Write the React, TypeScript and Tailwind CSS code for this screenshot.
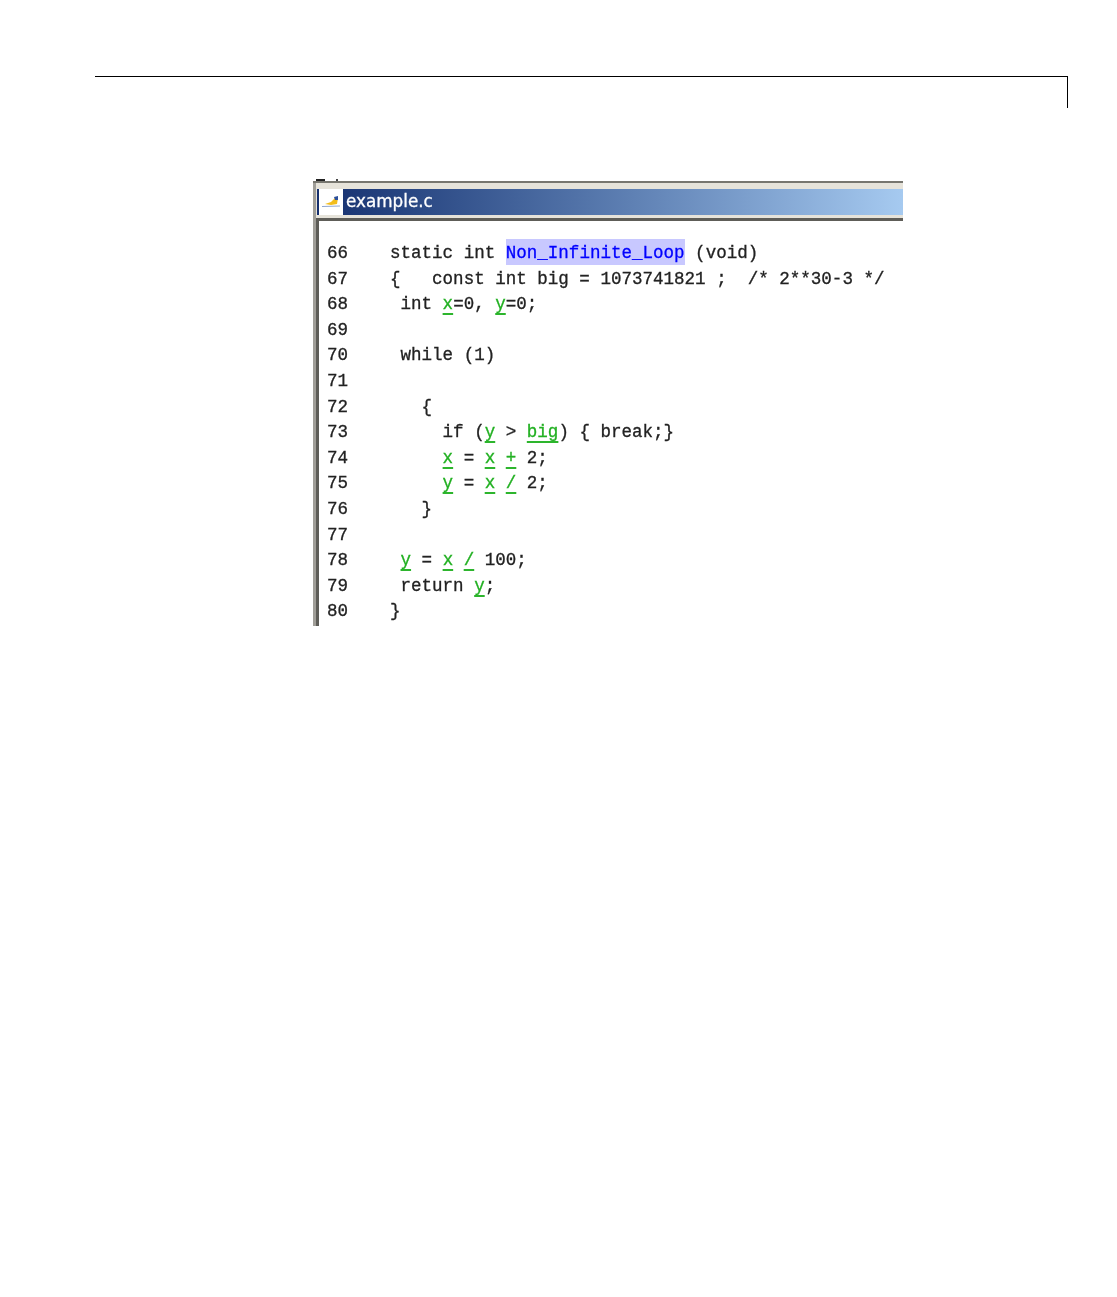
const rows: { n: number; code: React.ReactNode }[] = [
  {
    n: 66,
    code: (
      <>
        static int <span className="bg-[#c8c8ff] text-[#0000ff] pt-[4px] pb-[2px]">Non_Infinite_Loop</span> (void)
      </>
    ),
  },
  { n: 67, code: "{   const int big = 1073741821 ;  /* 2**30-3 */" },
  {
    n: 68,
    code: (
      <>
        {" int "}
        <Ok>x</Ok>=0, <Ok>y</Ok>=0;
      </>
    ),
  },
  { n: 69, code: "" },
  { n: 70, code: " while (1)" },
  { n: 71, code: "" },
  { n: 72, code: "   {" },
  {
    n: 73,
    code: (
      <>
        {"     if ("}
        <Ok>y</Ok> {">"} <Ok>big</Ok>) {"{ break;}"}
      </>
    ),
  },
  {
    n: 74,
    code: (
      <>
        {"     "}
        <Ok>x</Ok> = <Ok>x</Ok> <Ok>+</Ok> 2;
      </>
    ),
  },
  {
    n: 75,
    code: (
      <>
        {"     "}
        <Ok>y</Ok> = <Ok>x</Ok> <Ok>/</Ok> 2;
      </>
    ),
  },
  { n: 76, code: "   }" },
  { n: 77, code: "" },
  {
    n: 78,
    code: (
      <>
        {" "}
        <Ok>y</Ok> = <Ok>x</Ok> <Ok>/</Ok> 100;
      </>
    ),
  },
  {
    n: 79,
    code: (
      <>
        {" return "}
        <Ok>y</Ok>;
      </>
    ),
  },
  { n: 80, code: "}" },
];

// green = proven safe by the checker
function Ok({ children }: { children: React.ReactNode }) {
  return (
    <span className="text-[#22b022] underline decoration-[#2db52d] decoration-[1.5px] underline-offset-[4px] [text-decoration-skip-ink:none]">
      {children}
    </span>
  );
}

function FileIcon() {
  return (
    <div className="w-[24px] h-[26px] bg-white flex items-center justify-center">
      <svg width="20" height="14" viewBox="0 0 20 14">
        <path d="M4 9 L10 7 L14 3 L17 3 L16 9 L10 10 Z" fill="#f2bd1c" />
        <path d="M13 2 L17 1 L17 5 L14 5 Z" fill="#2c4f9a" />
        <path d="M1 11 L19 10.5 L19 11.5 L1 12 Z" fill="#8fa6d0" />
      </svg>
    </div>
  );
}

export default function App() {
  return (
    <div className="min-h-[1297px] bg-white pt-[76px]">
      <div className="ml-[95px] w-[973px] h-[32px] border-t border-r border-black" />

      <div className="ml-[313px] mt-[71px] w-[590px]">
        <div className="h-[2px] flex pl-[3px]">
          <div className="w-[9px] bg-[#222222]" />
          <div className="w-[11px]" />
          <div className="w-[2px] bg-[#444444]" />
        </div>
        <div className="h-[445px] flex flex-col overflow-hidden border-t-[2px] border-[#77766f] bg-[#e6e3da]">
          <div className="flex-none pt-[6px] pl-[1px] border-l-[3px] border-[#a09e98]">
            <div className="h-[26px] bg-linear-to-r from-[#16306f] to-[#a6caf0] flex items-center pl-[2px]">
              <FileIcon />
              <span className="ml-[3px] text-[16.8px] font-['DejaVu_Sans',sans-serif] text-white [-webkit-text-stroke:0.3px_#ffffff] blur-[0.3px]">
                example.c
              </span>
            </div>
          </div>
          <div className="flex-none h-[3px] border-l-[3px] border-[#a09e98]" />
          <div className="flex-1 flex border-l-[3px] border-[#a09e98]">
            <div className="flex-1 border-t-[3px] border-l-[3px] border-[#5e5d58] bg-white pt-[20px] pl-[8px] font-['Liberation_Mono',monospace] text-[17.55px] leading-[25.6px] text-[#222222] [-webkit-text-stroke:0.3px] blur-[0.3px]">
              {rows.map((r) => (
                <div key={r.n} className="flex h-[25.6px] whitespace-pre">
                  <span className="w-[63px] shrink-0">{r.n}</span>
                  <span>{r.code}</span>
                </div>
              ))}
            </div>
          </div>
        </div>
      </div>
    </div>
  );
}
